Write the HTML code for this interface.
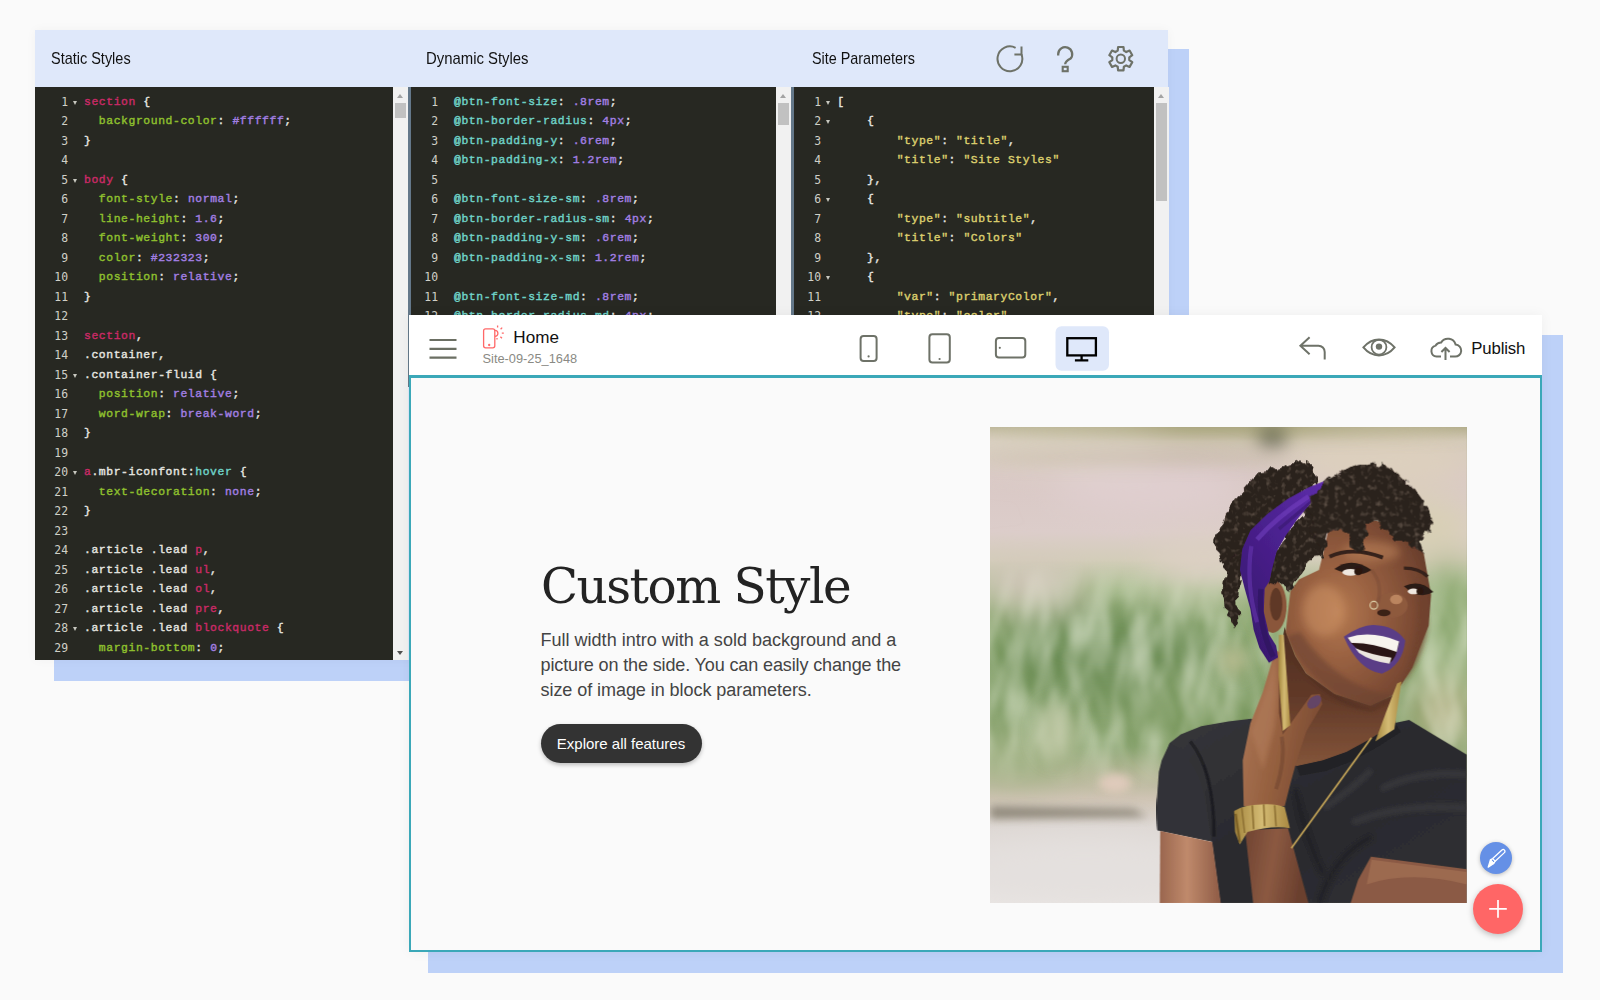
<!DOCTYPE html>
<html lang="en">
<head>
<meta charset="utf-8">
<title>Custom Style – Code Editor</title>
<style>
*{box-sizing:border-box;margin:0;padding:0}
html,body{width:1600px;height:1000px;overflow:hidden;background:#fafafa}
body{position:relative;font-family:"Liberation Sans",sans-serif;color:#111}
.abs{position:absolute}
.sh1{left:54px;top:49px;width:1134.5px;height:631.5px;background:#bdd1f8}
.sh2{left:428px;top:335px;width:1135px;height:638px;background:#bdd1f8}
.p1{left:35px;top:29.6px;width:1133.2px;height:630.4px;background:#dfe8fa;box-shadow:0 0 10px rgba(0,0,0,.04)}
.hd{position:absolute;top:18.2px;height:22px;line-height:22px;font-size:16.6px;color:#111;white-space:nowrap;transform:scaleX(.85);transform-origin:0 50%}
.ed{position:absolute;top:57.5px;background:#272822;overflow:hidden}
.sb{position:absolute;top:57.5px;width:15px;background:#f1f1f1}
.sb b{position:absolute;left:2px;width:11px;background:#c1c1c1}
.sb:before{content:"";position:absolute;left:4px;top:6.5px;border:3.5px solid transparent;border-top:0;border-bottom:4px solid #a3a3a3}
.sb.dn:after{content:"";position:absolute;left:4px;bottom:5px;border:3.5px solid transparent;border-bottom:0;border-top:4px solid #505050}
.strip{position:absolute;top:57.5px;width:3px;background:#64788a}
.ln{position:relative;height:19.5px;line-height:19.5px;white-space:nowrap}
.no{position:absolute;left:0;top:0;text-align:right;font-family:"DejaVu Sans Mono","Liberation Mono",monospace;font-size:11.4px;color:#d0d0c8}
.fold{position:absolute;top:8px;border:2.5px solid transparent;border-bottom:0;border-top:4px solid #c8c8c0}
.cd{position:absolute;top:0;font-family:"Liberation Mono","DejaVu Sans Mono",monospace;font-size:11.4px;letter-spacing:.582px;font-weight:normal;-webkit-text-stroke:.4px;color:#e6e6e0;line-height:19.5px}
.r{color:#c92a66}.g{color:#8fc02e}.p{color:#a27fe2}.c{color:#6fd3c8}.y{color:#dccf6e}
#e1 .no{width:33px}#e1 .fold{left:38px}#e1 .cd{left:49px}
#e2 .no{width:27px}#e2 .cd{left:43px}
#e3 .no{width:27px}#e3 .fold{left:32px}#e3 .cd{left:43.3px}
.lines{position:absolute;left:0;top:5.5px;right:0}
/* preview */
.p2{left:408.5px;top:315px;width:1133.5px;height:637px;background:#fff;box-shadow:0 0 12px rgba(0,0,0,.05)}
.tb{position:absolute;left:0;top:0;right:0;height:60px;background:#fff}
.cv{position:absolute;left:0;top:60px;right:0;bottom:0;background:#fafafa;border:2px solid #3ba8b8;border-top-width:3px}
.home{position:absolute;left:104.8px;top:11.6px;font-size:17.1px;line-height:22px;color:#111}
.site{position:absolute;left:74px;top:36.2px;font-size:12.8px;line-height:16px;color:#8a8a84}
.pub{position:absolute;left:1062.8px;top:23.2px;font-size:16.8px;line-height:22px;color:#111;letter-spacing:-.15px}
h1{position:absolute;left:132.5px;top:240.5px;font-family:"DejaVu Serif","Liberation Serif",serif;font-weight:normal;font-size:48.5px;line-height:60px;color:#232323;white-space:nowrap;letter-spacing:-1.55px}
.lead{position:absolute;left:132px;top:313px;width:400px;font-family:"Liberation Sans",sans-serif;font-size:18.05px;line-height:25px;color:#444;white-space:nowrap}
.btn{position:absolute;left:132px;top:409px;width:161px;height:39px;border-radius:20px;background:#333;color:#fff;font-family:"Liberation Sans",sans-serif;font-size:15px;line-height:39px;text-align:center;box-shadow:0 2px 4px rgba(0,0,0,.25)}
.photo{position:absolute;left:581.3px;top:111.6px;width:476.8px;height:476.4px;overflow:hidden;background:#9aa380}
.fab1{position:absolute;left:1071.25px;top:526.9px;width:32px;height:32px;border-radius:50%;background:#6590e6;box-shadow:0 1px 4px rgba(0,0,0,.25)}
.fab2{position:absolute;left:1064.5px;top:568.8px;width:49.8px;height:49.8px;border-radius:50%;background:#ff6666;box-shadow:0 2px 6px rgba(0,0,0,.25)}
svg{display:block}
</style>
</head>
<body>
<div class="abs sh1"></div>
<div class="abs sh2"></div>

<div class="abs p1">
  <div class="hd" style="left:16px;transform:scaleX(.872)">Static Styles</div>
  <div class="hd" style="left:390.6px;transform:scaleX(.897)">Dynamic Styles</div>
  <div class="hd" style="left:777px;transform:scaleX(.866)">Site Parameters</div>
  <svg class="abs" style="left:955px;top:11.4px" width="150" height="36" viewBox="0 0 150 36" fill="none" stroke="#6e7268" stroke-width="2">
    <path d="M31.5 13.4A12.4 12.4 0 1 1 25.6 6.8"/>
    <path d="M24.4 13.4H31.5V5.6"/>
    <path stroke-width="2.3" d="M68.2 14.4V13A7 7 0 1 1 80.6 17.6Q75.2 20.4 75.2 23.2"/>
    <rect stroke-width="2.1" x="72.7" y="25.8" width="5" height="4.4"/>
    <circle cx="130.8" cy="17.7" r="4.2"/>
    <path stroke-width="2.2" stroke-linejoin="round" d="M133.88 9.67 L133.50 6.01 L128.10 6.01 L127.72 9.67 L125.39 11.02 L122.02 9.52 L119.32 14.19 L122.31 16.35 L122.31 19.05 L119.32 21.21 L122.02 25.88 L125.39 24.38 L127.72 25.73 L128.10 29.39 L133.50 29.39 L133.88 25.73 L136.21 24.38 L139.58 25.88 L142.28 21.21 L139.29 19.05 L139.29 16.35 L142.28 14.19 L139.58 9.52 L136.21 11.02Z"/>
  </svg>

  <div class="ed" id="e1" style="left:0;width:358px;height:572.9px"><div class="lines">
<div class="ln"><span class="no">1</span><i class="fold"></i><pre class="cd"><span class="r">section</span> {</pre></div>
<div class="ln"><span class="no">2</span><pre class="cd">  <span class="g">background-color</span>: <span class="p">#ffffff</span>;</pre></div>
<div class="ln"><span class="no">3</span><pre class="cd">}</pre></div>
<div class="ln"><span class="no">4</span><pre class="cd"></pre></div>
<div class="ln"><span class="no">5</span><i class="fold"></i><pre class="cd"><span class="r">body</span> {</pre></div>
<div class="ln"><span class="no">6</span><pre class="cd">  <span class="g">font-style</span>: <span class="p">normal</span>;</pre></div>
<div class="ln"><span class="no">7</span><pre class="cd">  <span class="g">line-height</span>: <span class="p">1.6</span>;</pre></div>
<div class="ln"><span class="no">8</span><pre class="cd">  <span class="g">font-weight</span>: <span class="p">300</span>;</pre></div>
<div class="ln"><span class="no">9</span><pre class="cd">  <span class="g">color</span>: <span class="p">#232323</span>;</pre></div>
<div class="ln"><span class="no">10</span><pre class="cd">  <span class="g">position</span>: <span class="p">relative</span>;</pre></div>
<div class="ln"><span class="no">11</span><pre class="cd">}</pre></div>
<div class="ln"><span class="no">12</span><pre class="cd"></pre></div>
<div class="ln"><span class="no">13</span><pre class="cd"><span class="r">section</span>,</pre></div>
<div class="ln"><span class="no">14</span><pre class="cd">.container,</pre></div>
<div class="ln"><span class="no">15</span><i class="fold"></i><pre class="cd">.container-fluid {</pre></div>
<div class="ln"><span class="no">16</span><pre class="cd">  <span class="g">position</span>: <span class="p">relative</span>;</pre></div>
<div class="ln"><span class="no">17</span><pre class="cd">  <span class="g">word-wrap</span>: <span class="p">break-word</span>;</pre></div>
<div class="ln"><span class="no">18</span><pre class="cd">}</pre></div>
<div class="ln"><span class="no">19</span><pre class="cd"></pre></div>
<div class="ln"><span class="no">20</span><i class="fold"></i><pre class="cd"><span class="r">a</span>.mbr-iconfont:<span class="c">hover</span> {</pre></div>
<div class="ln"><span class="no">21</span><pre class="cd">  <span class="g">text-decoration</span>: <span class="p">none</span>;</pre></div>
<div class="ln"><span class="no">22</span><pre class="cd">}</pre></div>
<div class="ln"><span class="no">23</span><pre class="cd"></pre></div>
<div class="ln"><span class="no">24</span><pre class="cd">.article .lead <span class="r">p</span>,</pre></div>
<div class="ln"><span class="no">25</span><pre class="cd">.article .lead <span class="r">ul</span>,</pre></div>
<div class="ln"><span class="no">26</span><pre class="cd">.article .lead <span class="r">ol</span>,</pre></div>
<div class="ln"><span class="no">27</span><pre class="cd">.article .lead <span class="r">pre</span>,</pre></div>
<div class="ln"><span class="no">28</span><i class="fold"></i><pre class="cd">.article .lead <span class="r">blockquote</span> {</pre></div>
<div class="ln"><span class="no">29</span><pre class="cd">  <span class="g">margin-bottom</span>: <span class="p">0</span>;</pre></div>
  </div></div>
  <div class="sb dn" style="left:358px;height:572.9px"><b style="top:16px;height:14.5px"></b></div>
  <div class="strip" style="left:373px;height:300px"></div>
  <div class="ed" id="e2" style="left:376px;width:365px;height:300px"><div class="lines">
<div class="ln"><span class="no">1</span><pre class="cd"><span class="c">@btn-font-size</span>: <span class="p">.8rem</span>;</pre></div>
<div class="ln"><span class="no">2</span><pre class="cd"><span class="c">@btn-border-radius</span>: <span class="p">4px</span>;</pre></div>
<div class="ln"><span class="no">3</span><pre class="cd"><span class="c">@btn-padding-y</span>: <span class="p">.6rem</span>;</pre></div>
<div class="ln"><span class="no">4</span><pre class="cd"><span class="c">@btn-padding-x</span>: <span class="p">1.2rem</span>;</pre></div>
<div class="ln"><span class="no">5</span><pre class="cd"></pre></div>
<div class="ln"><span class="no">6</span><pre class="cd"><span class="c">@btn-font-size-sm</span>: <span class="p">.8rem</span>;</pre></div>
<div class="ln"><span class="no">7</span><pre class="cd"><span class="c">@btn-border-radius-sm</span>: <span class="p">4px</span>;</pre></div>
<div class="ln"><span class="no">8</span><pre class="cd"><span class="c">@btn-padding-y-sm</span>: <span class="p">.6rem</span>;</pre></div>
<div class="ln"><span class="no">9</span><pre class="cd"><span class="c">@btn-padding-x-sm</span>: <span class="p">1.2rem</span>;</pre></div>
<div class="ln"><span class="no">10</span><pre class="cd"></pre></div>
<div class="ln"><span class="no">11</span><pre class="cd"><span class="c">@btn-font-size-md</span>: <span class="p">.8rem</span>;</pre></div>
<div class="ln"><span class="no">12</span><pre class="cd"><span class="c">@btn-border-radius-md</span>: <span class="p">4px</span>;</pre></div>
  </div></div>
  <div class="sb" style="left:741px;height:300px"><b style="top:16px;height:22px"></b></div>
  <div class="strip" style="left:756px;height:300px"></div>
  <div class="ed" id="e3" style="left:759px;width:359.5px;height:300px"><div class="lines">
<div class="ln"><span class="no">1</span><i class="fold"></i><pre class="cd">[</pre></div>
<div class="ln"><span class="no">2</span><i class="fold"></i><pre class="cd">    {</pre></div>
<div class="ln"><span class="no">3</span><pre class="cd">        <span class="y">"type"</span>: <span class="y">"title"</span>,</pre></div>
<div class="ln"><span class="no">4</span><pre class="cd">        <span class="y">"title"</span>: <span class="y">"Site Styles"</span></pre></div>
<div class="ln"><span class="no">5</span><pre class="cd">    },</pre></div>
<div class="ln"><span class="no">6</span><i class="fold"></i><pre class="cd">    {</pre></div>
<div class="ln"><span class="no">7</span><pre class="cd">        <span class="y">"type"</span>: <span class="y">"subtitle"</span>,</pre></div>
<div class="ln"><span class="no">8</span><pre class="cd">        <span class="y">"title"</span>: <span class="y">"Colors"</span></pre></div>
<div class="ln"><span class="no">9</span><pre class="cd">    },</pre></div>
<div class="ln"><span class="no">10</span><i class="fold"></i><pre class="cd">    {</pre></div>
<div class="ln"><span class="no">11</span><pre class="cd">        <span class="y">"var"</span>: <span class="y">"primaryColor"</span>,</pre></div>
<div class="ln"><span class="no">12</span><pre class="cd">        <span class="y">"type"</span>: <span class="y">"color"</span>,</pre></div>
  </div></div>
  <div class="sb" style="left:1118.5px;height:300px"><b style="top:16px;height:98px"></b></div>
</div>

<div class="abs p2">
  <div class="tb">
    <svg class="abs" style="left:0;top:0" width="1134" height="60" viewBox="0 0 1134 60" fill="none" stroke="#6e7268" stroke-width="2">
      <path d="M20.5 25h27M20.5 33.8h27M20.5 42.6h27" stroke="#6b6f63" stroke-width="2.2"/>
      <!-- page icon -->
      <g stroke="#ff6868" stroke-width="1.3">
        <rect x="74.6" y="13.8" width="11.2" height="19" rx="2"/>
        <circle cx="80.2" cy="30" r=".5" fill="#ff6868"/>
        <path d="M85.8 15.4A3 3 0 1 1 86 21.4"/>
        <path d="M88.6 12.4V10.4M91.6 14.2l1.6-1.6M92.8 18.2h2M91.4 21.8l1.6 1.4M88 23v1.4"/>
      </g>
      <!-- phone -->
      <rect x="451.6" y="21" width="16" height="25" rx="3"/>
      <circle cx="459.6" cy="41.4" r="1.1" fill="#6e7268" stroke="none"/>
      <!-- tablet -->
      <rect x="520.4" y="19.2" width="20.4" height="28.4" rx="3"/>
      <circle cx="530.6" cy="44" r="1.1" fill="#6e7268" stroke="none"/>
      <!-- landscape -->
      <rect x="586.9" y="23" width="29.4" height="19.6" rx="3"/>
      <circle cx="590.8" cy="32.8" r="1.1" fill="#6e7268" stroke="none"/>
      <!-- desktop -->
      <rect x="646.5" y="11.2" width="53.5" height="44.5" rx="6" fill="#dfe8fa" stroke="none"/>
      <g stroke="#000" stroke-width="2.3">
        <rect x="658.3" y="23.2" width="28.6" height="17.2"/>
        <path d="M672.6 40.4v4.6M665.9 45.4h13.4"/>
      </g>
      <!-- undo -->
      <path d="M900.6 22.2L891.4 30.7L900.6 39.2M891.8 30.7H909.5A6.2 6.2 0 0 1 915.7 36.9V44.6"/>
      <!-- eye -->
      <path d="M954.4 32.4Q961 24.4 970 24.4Q979 24.4 985.6 32.4Q979 40.4 970 40.4Q961 40.4 954.4 32.4Z"/>
      <circle cx="970" cy="32.2" r="7.4" stroke-width="1.8"/>
      <circle cx="970" cy="31.6" r="3.2" fill="#6e7268" stroke="none"/>
      <!-- cloud -->
      <path d="M1032 41.6H1027.6A5.6 5.6 0 0 1 1026.6 30.6A6.2 6.2 0 0 1 1032.2 27.4A8 8 0 0 1 1046.6 29.6A6 6 0 0 1 1045.8 41.6H1041"/>
      <path d="M1036.5 45V33.4M1032.4 37L1036.5 33L1040.6 37"/>
    </svg>
    <div class="home">Home</div>
    <div class="site">Site-09-25_1648</div>
    <div class="pub">Publish</div>
  </div>
  <div class="cv"></div>
  <h1>Custom Style</h1>
  <div class="lead"><span>Full width intro with a sold background and a</span><br><span style="letter-spacing:-.14px">picture on the side. You can easily change the</span><br><span style="letter-spacing:-.07px">size of image in block parameters.</span></div>
  <div class="btn">Explore all features</div>
  <div class="photo">
<svg width="476.8" height="476.4" viewBox="0 0 1000 1000" preserveAspectRatio="none">
<defs>
  <filter id="b40" x="-30%" y="-30%" width="160%" height="160%"><feGaussianBlur stdDeviation="36"/></filter>
  <filter id="b20" x="-30%" y="-30%" width="160%" height="160%"><feGaussianBlur stdDeviation="18"/></filter>
  <filter id="b10" x="-30%" y="-30%" width="160%" height="160%"><feGaussianBlur stdDeviation="9"/></filter>
  <filter id="b5" x="-20%" y="-20%" width="140%" height="140%"><feGaussianBlur stdDeviation="5"/></filter>
  <filter id="b2" x="-10%" y="-10%" width="120%" height="120%"><feGaussianBlur stdDeviation="1.5"/></filter>
  <filter id="curl" x="-10%" y="-10%" width="120%" height="120%">
    <feTurbulence type="fractalNoise" baseFrequency="0.05" numOctaves="2" seed="7" result="n"/>
    <feDisplacementMap in="SourceGraphic" in2="n" scale="24" xChannelSelector="R" yChannelSelector="G"/>
    <feGaussianBlur stdDeviation="1.6"/>
  </filter>
  <filter id="htex" x="0" y="0" width="100%" height="100%">
    <feTurbulence type="fractalNoise" baseFrequency="0.09" numOctaves="2" seed="11" result="n"/>
    <feColorMatrix in="n" type="matrix" values="0 0 0 0 .36  0 0 0 0 .27  0 0 0 0 .21  2.4 0 0 0 -1.25" result="c"/>
    <feComposite in="c" in2="SourceGraphic" operator="in"/>
  </filter>
  <filter id="grass" x="0" y="0" width="100%" height="100%">
    <feTurbulence type="fractalNoise" baseFrequency="0.022 0.007" numOctaves="2" seed="3" result="n"/>
    <feColorMatrix in="n" type="matrix" values="0 0 0 0 1  0 0 0 0 1  0 0 0 0 .9  1.6 0 0 0 -0.62"/>
    <feGaussianBlur stdDeviation="5"/>
  </filter>
  <linearGradient id="bgv" x1="0" y1="0" x2="0" y2="1">
    <stop offset="0" stop-color="#b0ab88"/>
    <stop offset="0.03" stop-color="#d3c9b8"/>
    <stop offset="0.10" stop-color="#d9c8c5"/>
    <stop offset="0.22" stop-color="#dccdca"/>
    <stop offset="0.28" stop-color="#d3cdb9"/>
    <stop offset="0.34" stop-color="#a8bb8d"/>
    <stop offset="0.42" stop-color="#86a26a"/>
    <stop offset="0.58" stop-color="#78975d"/>
    <stop offset="0.67" stop-color="#88a36e"/>
    <stop offset="0.73" stop-color="#b4b696"/>
    <stop offset="0.78" stop-color="#cfc4b4"/>
    <stop offset="0.84" stop-color="#ddd7d3"/>
    <stop offset="1" stop-color="#e9e5e3"/>
  </linearGradient>
  <linearGradient id="grassfade" x1="0" y1="0" x2="0" y2="1">
    <stop offset="0.28" stop-color="#fff" stop-opacity="0"/>
    <stop offset="0.40" stop-color="#fff" stop-opacity="1"/>
    <stop offset="0.66" stop-color="#fff" stop-opacity="1"/>
    <stop offset="0.76" stop-color="#fff" stop-opacity="0"/>
  </linearGradient>
  <mask id="gm"><rect width="1000" height="1000" fill="url(#grassfade)"/></mask>
  <radialGradient id="face" cx="0.36" cy="0.5" r="0.7">
    <stop offset="0" stop-color="#b57a51"/>
    <stop offset="0.35" stop-color="#9a6242"/>
    <stop offset="0.75" stop-color="#7c4b34"/>
    <stop offset="1" stop-color="#643b2a"/>
  </radialGradient>
  <linearGradient id="neck" x1="0" y1="0" x2="0" y2="1">
    <stop offset="0" stop-color="#4e2e20"/>
    <stop offset="0.5" stop-color="#623a29"/>
    <stop offset="1" stop-color="#85563a"/>
  </linearGradient>
  <linearGradient id="scarf" x1="0.9" y1="0" x2="0.2" y2="1">
    <stop offset="0" stop-color="#5c2ca8"/>
    <stop offset="0.45" stop-color="#4a208e"/>
    <stop offset="1" stop-color="#37186c"/>
  </linearGradient>
  <linearGradient id="arm" x1="0" y1="0" x2="1" y2="0">
    <stop offset="0" stop-color="#9a664e"/>
    <stop offset="0.45" stop-color="#c08a6c"/>
    <stop offset="1" stop-color="#8f5c46"/>
  </linearGradient>
  <linearGradient id="farm" x1="0" y1="0" x2="1" y2="0.2">
    <stop offset="0" stop-color="#704432"/>
    <stop offset="0.5" stop-color="#8c5a42"/>
    <stop offset="1" stop-color="#6a3f2e"/>
  </linearGradient>
  <linearGradient id="hand" x1="0" y1="0" x2="1" y2="0.4">
    <stop offset="0" stop-color="#b07a5a"/>
    <stop offset="0.6" stop-color="#95603f"/>
    <stop offset="1" stop-color="#7c4c34"/>
  </linearGradient>
  <linearGradient id="gold" x1="0" y1="0" x2="1" y2="0">
    <stop offset="0" stop-color="#a4863e"/>
    <stop offset="0.5" stop-color="#d4bb74"/>
    <stop offset="1" stop-color="#aa8a42"/>
  </linearGradient>
  <linearGradient id="shirt" x1="0" y1="0" x2="1" y2="1">
    <stop offset="0" stop-color="#37373b"/>
    <stop offset="0.5" stop-color="#2a2a2e"/>
    <stop offset="1" stop-color="#303034"/>
  </linearGradient>
</defs>
<rect width="1000" height="1000" fill="url(#bgv)"/>
<g filter="url(#b40)">
  <ellipse cx="150" cy="40" rx="220" ry="36" fill="#e2d9cc"/>
  <ellipse cx="820" cy="70" rx="200" ry="60" fill="#ddd0be"/>
  <ellipse cx="900" cy="210" rx="120" ry="60" fill="#d8d0b4"/>
  <ellipse cx="330" cy="130" rx="200" ry="50" fill="#e0cfd0"/>
  <ellipse cx="450" cy="280" rx="120" ry="50" fill="#ddd0c4"/>
  <ellipse cx="250" cy="480" rx="240" ry="90" fill="#6c8d54"/>
  <ellipse cx="430" cy="600" rx="100" ry="90" fill="#7c9a60"/>
  <ellipse cx="960" cy="480" rx="60" ry="200" fill="#8ca870"/>
  <ellipse cx="950" cy="600" rx="60" ry="70" fill="#b9b68c"/>
  <ellipse cx="60" cy="690" rx="120" ry="50" fill="#a3b386"/><ellipse cx="80" cy="330" rx="120" ry="40" fill="#d6c7bf"/>
  <ellipse cx="200" cy="930" rx="260" ry="70" fill="#e4e0de"/>
</g>
<g mask="url(#gm)"><rect x="-300" y="-300" width="1600" height="1600" fill="#c2cfa8" filter="url(#grass)" opacity=".6" transform="rotate(14 500 500)"/><rect x="-300" y="-300" width="1600" height="1600" fill="#4f7440" filter="url(#grass)" opacity=".45" transform="rotate(-12 420 560) translate(130 40)"/></g>
<g filter="url(#b20)">
  <ellipse cx="592" cy="14" rx="34" ry="26" fill="#4f5248"/>
  <ellipse cx="300" cy="62" rx="330" ry="12" fill="#bdb09c" opacity=".7"/>
  <ellipse cx="500" cy="8" rx="500" ry="8" fill="#a5a274"/>
  <ellipse cx="510" cy="490" rx="26" ry="26" fill="#c0c096"/>
  <ellipse cx="140" cy="640" rx="40" ry="60" fill="#c9cfae" opacity=".7"/>
</g>
<g filter="url(#b10)">
  <path d="M0 796 L300 802 L330 818 L0 822Z" fill="#8f887a"/>
  <ellipse cx="262" cy="748" rx="34" ry="20" fill="#dfcabb"/>
</g>

<g filter="url(#b2)">
  <!-- neck / chest skin -->
  <path d="M618 420 L640 480 L663 517 L723 560 L798 584 L852 560 L846 600 L852 626 L800 660 L748 690 L698 706 L640 716 L612 690 L598 650 L604 500Z" fill="url(#neck)"/>
  <path d="M640 480 Q700 590 800 596 L850 566 Q760 575 680 500Z" fill="#4f2f22" opacity=".55" filter="url(#b5)"/>
  <!-- shirt -->
  <path d="M548 612 L500 618 L443 628 L400 645 L377 663 L360 700 L354 724 L349 800 L351 846 L465 870 L483 1000 L1000 1000 L1000 688 L924 642 L879 615 L849 621 L799 654 L748 682 L698 700 L643 712 L612 690 L590 640Z" fill="url(#shirt)"/>
  <path d="M849 621 L799 654 L748 682 L698 700 L643 712 L650 732 L704 722 L758 702 L812 672 L862 640Z" fill="#222226"/>
  <path d="M377 663 Q440 700 452 780 L465 870 L351 846 L349 800 L356 720Z" fill="#333337"/>
  <path d="M420 660 Q470 720 470 860" stroke="#1c1c20" stroke-width="7" fill="none" opacity=".8"/>
  <path d="M820 760 Q900 720 1000 730 M760 830 Q860 790 1000 800 M700 800 Q760 760 800 720" stroke="#3f3f44" stroke-width="14" fill="none" opacity=".6" filter="url(#b5)"/>
  <path d="M690 1000 Q720 900 800 860 M640 760 Q660 860 700 940" stroke="#1d1d21" stroke-width="12" fill="none" opacity=".6" filter="url(#b5)"/>
  <!-- right arm -->
  <path d="M799 902 L1000 928 L1000 1000 L756 1000 L772 950Z" fill="#8b5a44"/>
  <path d="M800 908 L1000 934 L1000 960 Q880 930 790 960Z" fill="#a06e54" opacity=".8"/>
  <!-- left upper arm -->
  <path d="M357 848 L466 871 L484 1000 L356 1000Z" fill="url(#arm)"/>
  <!-- forearm -->
  <path d="M535 846 L625 842 L668 1000 L552 1000Z" fill="url(#farm)"/>
  <!-- hand -->
  <path d="M532 796 L530 700 L546 622 L572 557 L590 497 L598 468 L610 474 L606 540 L606 600 L614 646 L648 598 L674 562 L692 560 L697 582 L664 638 L644 698 L630 748 L618 796Z" fill="url(#hand)"/>
  <path d="M548 640 L580 545 L598 480 L602 560 L596 630 L572 720Z" fill="#b27c5a" opacity=".6" filter="url(#b5)"/>
  <path d="M612 650 Q620 700 600 760" stroke="#6e4430" stroke-width="8" fill="none" opacity=".5"/>
  <ellipse cx="680" cy="577" rx="17" ry="11" fill="#644466" transform="rotate(-42 680 577)"/>
  <!-- watch -->
  <path d="M512 806 Q532 792 570 792 Q600 790 618 798 L629 842 Q590 836 540 850 L524 876 L514 850Z" fill="url(#gold)"/>
  <path d="M528 800 L534 852 M550 794 L553 844 M574 792 L576 838 M597 794 L600 838" stroke="#8f7234" stroke-width="3.5" fill="none"/>
  <path d="M515 812 L524 872" stroke="#7e6228" stroke-width="5" fill="none"/>
  <!-- ear -->
  <ellipse cx="593" cy="376" rx="29" ry="56" fill="#8a563a"/>
  <ellipse cx="600" cy="372" rx="13" ry="34" fill="#5e3826"/>
  <!-- face -->
  <path d="M698 268 L690 300 L648 320 L630 345 L620 430 L640 480 L663 517 L723 560 L798 585 L850 560 L886 505 L900 468 L920 417 L925 352 L910 267 L890 225 L850 205 L800 195 L760 198 L712 205Z" fill="url(#face)"/>
  <ellipse cx="700" cy="385" rx="44" ry="54" fill="#cf9468" opacity=".5" filter="url(#b10)"/>
  <ellipse cx="800" cy="262" rx="60" ry="22" fill="#b98058" opacity=".6" filter="url(#b10)"/>
  <path d="M622 440 Q680 560 800 590 L850 562 Q740 556 650 430Z" fill="#6a4230" opacity=".55" filter="url(#b5)"/>
  <path d="M880 300 Q930 360 915 440 Q900 500 860 545 Q890 470 896 400 Q900 350 880 300Z" fill="#70432f" opacity=".6" filter="url(#b5)"/>
  <!-- nose -->
  <ellipse cx="842" cy="374" rx="34" ry="27" fill="#8e5a3e"/>
  <ellipse cx="826" cy="390" rx="14" ry="7" fill="#3a2018"/>
  <ellipse cx="852" cy="362" rx="13" ry="10" fill="#c79068" opacity=".8"/>
  <path d="M800 300 Q826 330 812 372" stroke="#7c4c36" stroke-width="7" fill="none" opacity=".5"/>
  <!-- eyes -->
  <path d="M722 298 Q758 270 800 300 Q770 320 722 298Z" fill="#2a1a14"/>
  <ellipse cx="756" cy="305" rx="17" ry="7" fill="#efe8e0"/>
  <circle cx="772" cy="303" r="8" fill="#2a1810"/>
  <path d="M868 334 Q902 318 930 346 Q900 364 868 334Z" fill="#2a1a14"/>
  <ellipse cx="888" cy="345" rx="12" ry="6" fill="#efe8e0"/>
  <circle cx="901" cy="345" r="6.5" fill="#2a1810"/>
  <path d="M712 272 Q760 250 824 274" stroke="#36221a" stroke-width="8" fill="none"/>
  <path d="M868 296 Q900 296 918 314" stroke="#36221a" stroke-width="7" fill="none"/>
  <!-- mouth -->
  <path d="M742 440 Q784 412 810 416 Q850 418 871 448 Q866 500 822 518 Q772 510 742 440Z" fill="#5a3e86"/>
  <path d="M750 444 Q800 430 858 452 Q852 486 838 496 Q780 486 750 444Z" fill="#2a1414"/>
  <path d="M750 442 Q800 426 858 450 L853 472 Q800 452 758 453Z" fill="#f7f4ee"/>
  <path d="M766 464 Q800 478 842 484 L838 497 Q796 490 774 474Z" fill="#ece7df"/>
  <!-- earrings -->
  <path d="M606 436 L616 436 L630 626 L614 638 L605 520Z" fill="url(#gold)"/>
  <path d="M854 538 L863 534 L848 634 L808 660 L830 600Z" fill="url(#gold)"/>
  <path d="M800 652 L632 884" stroke="#c6a658" stroke-width="3.5" fill="none"/>
  <circle cx="805" cy="374" r="8" fill="none" stroke="#dccfa8" stroke-width="2.5"/>
</g>
<!-- back hair -->
<g id="hairb" filter="url(#curl)" fill="#2a201b">
  <path d="M684 116 L678 84 L649 72 L600 90 L562 96 L523 140 L494 184 L472 242 L480 276 L496 300 L540 280 L560 220 L600 180 L650 140Z"/>
  <path d="M494 290 L530 262 L526 320 L518 363 L521 406 L513 418 L494 388 L488 338Z"/>
  <path d="M590 300 L600 262 L620 228 L644 194 L668 165 L702 194 L690 232 L702 271 L673 276 L649 319 L634 344 L615 334 L586 324Z"/>
</g>
<g filter="url(#htex)" opacity=".5"><use href="#hairb"/></g>
<!-- scarf -->
<g filter="url(#b2)">
  <path d="M704 112 L668 127 L624 151 L581 183 L546 217 L529 256 L524 300 L534 339 L546 382 L553 426 L565 464 L585 495 L604 484 L600 459 L585 435 L574 387 L576 339 L586 324 L591 300 L601 262 L620 228 L644 194 L668 165 L694 134Z" fill="url(#scarf)"/>
  <path d="M560 236 Q600 190 668 146" stroke="#7a44c8" stroke-width="10" fill="none" opacity=".5"/>
  <path d="M548 250 Q536 330 560 410" stroke="#6c3ab8" stroke-width="9" fill="none" opacity=".5"/>
  <path d="M568 340 Q562 420 594 482" stroke="#2c145e" stroke-width="11" fill="none" opacity=".7"/>
  <path d="M606 214 Q640 186 682 150" stroke="#38196e" stroke-width="7" fill="none" opacity=".6"/>
</g>
<!-- front hair -->
<g id="hairf" filter="url(#curl)" fill="#2a201b">
  <path d="M668 166 L698 116 L748 86 L799 75 L849 91 L889 131 L929 186 L924 216 L899 236 L909 267 L879 241 L849 236 L819 201 L789 201 L784 262 L758 252 L738 211 L708 221 L698 272 L680 230Z"/>
</g>
<g filter="url(#htex)" opacity=".5"><use href="#hairf"/></g>
</svg>

  </div>
  <div class="fab1"><svg width="32" height="32" viewBox="0 0 32 32" fill="none" stroke="#fff" stroke-width="1.3" stroke-linejoin="round"><g transform="rotate(-43 16 16)"><path d="M13.2 14.2H25.8A1.8 1.8 0 0 1 25.8 17.8H13.2Z"/><path d="M13.2 14.2L10.6 13.6V18.4L13.2 17.8"/><path d="M10.6 13.6L4 17.4L10.6 18.4Z" fill="#fff"/></g></svg></div>
  <div class="fab2"><svg width="50" height="50" viewBox="0 0 50 50" stroke="#fff" stroke-width="1.7"><path d="M16.2 24.9H33.8M25 16.1V33.7"/></svg></div>
</div>
</body>
</html>
